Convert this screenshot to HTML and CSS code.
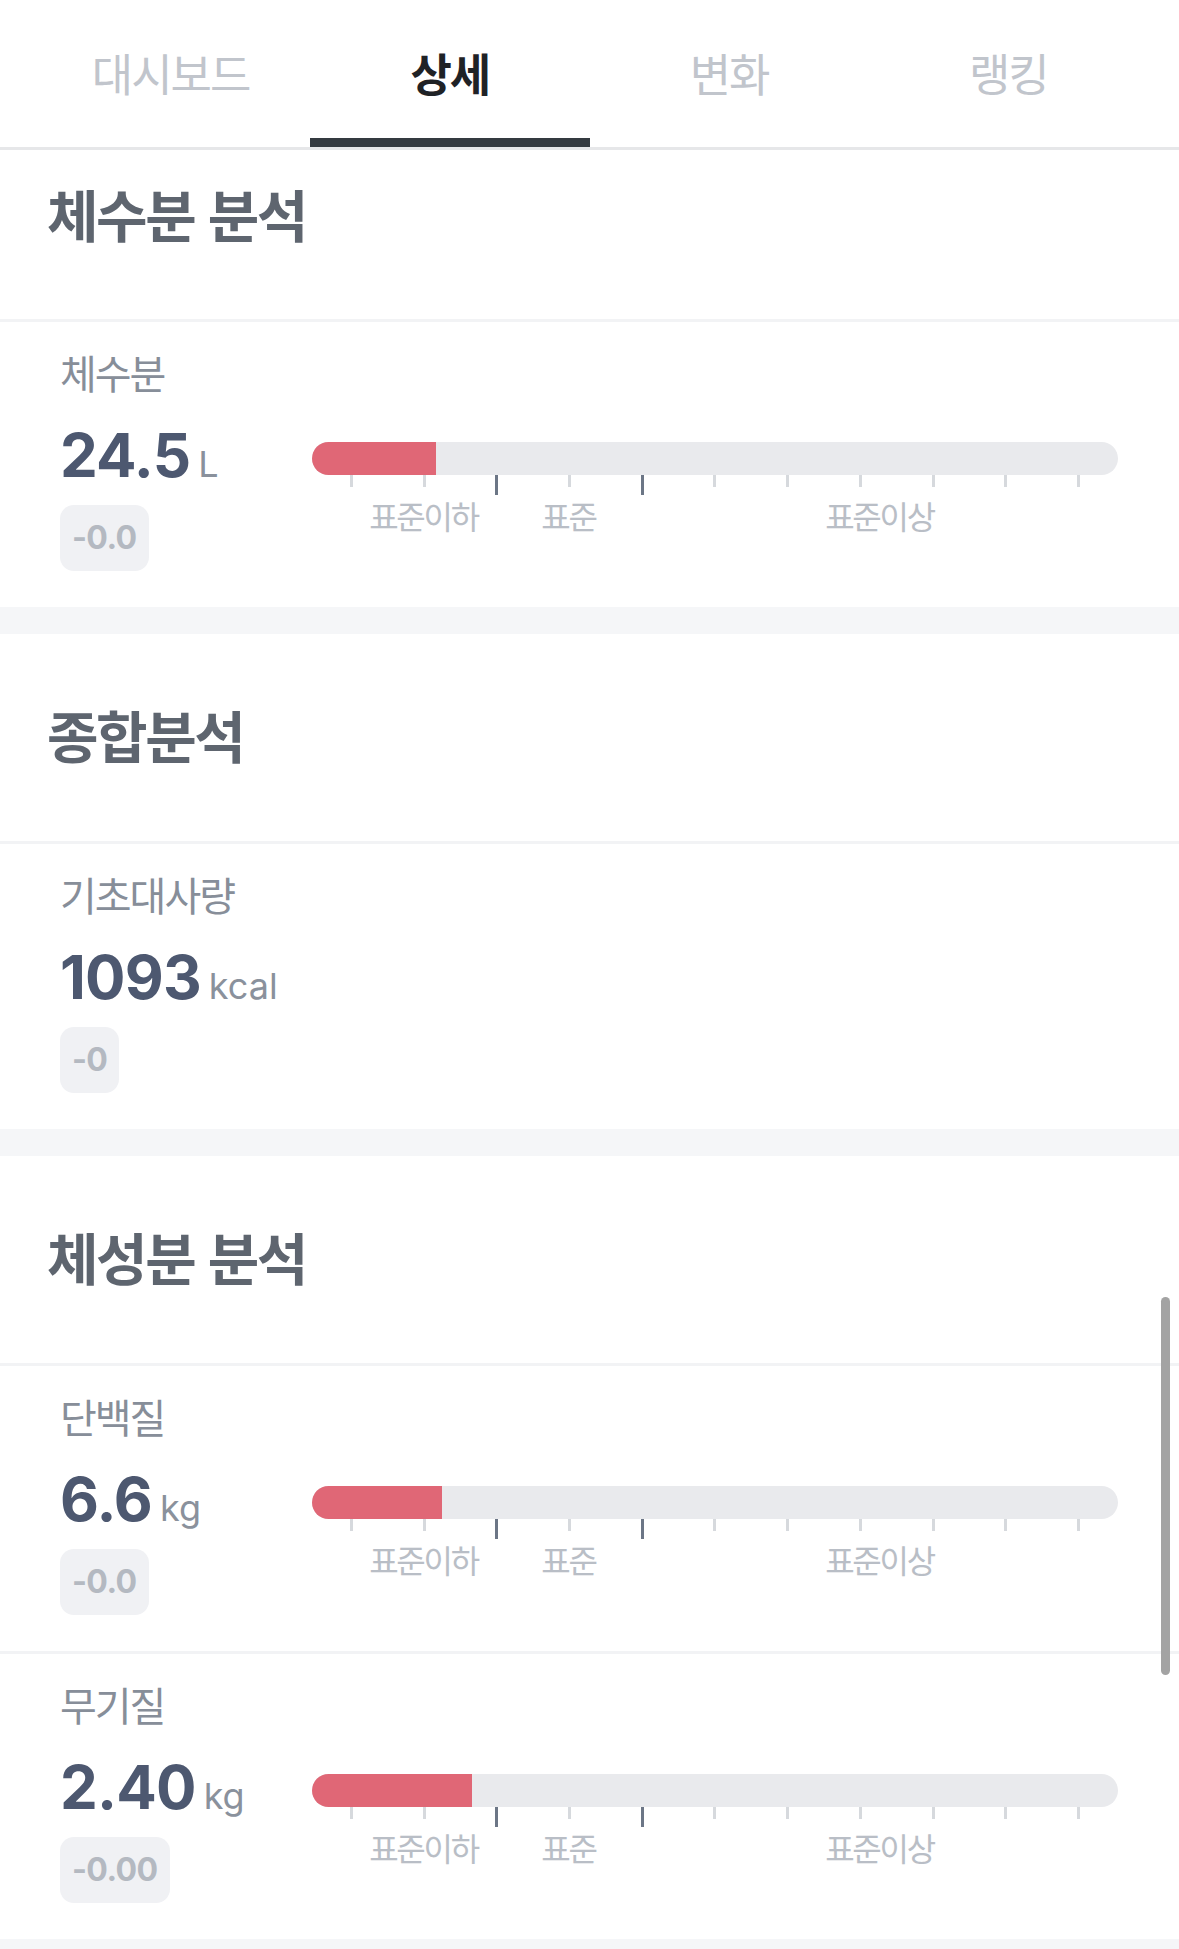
FILE: index.html
```html
<!DOCTYPE html>
<html lang="ko">
<head>
<meta charset="utf-8">
<title>상세</title>
<link rel="stylesheet" href="styles.css">
</head>
<body>
<nav class="tabs">
  <div class="tab">대시보드</div>
  <div class="tab active">상세</div>
  <div class="tab">변화</div>
  <div class="tab">랭킹</div>
</nav>

<section class="section">
  <div class="section-head first"><h2 class="heading">체수분 분석</h2></div>
  <div class="row">
    <div class="info">
      <div class="label">체수분</div>
      <div class="value-line"><span class="value">24.5</span><span class="unit">L</span></div>
      <div class="badge">-0.0</div>
    </div>
    <div class="chart">
      <div class="bar"><div class="fill" style="width:124px"></div></div>
      <div class="ticks"><i class="tick"></i><i class="tick"></i><i class="tick dark"></i><i class="tick"></i><i class="tick dark"></i><i class="tick"></i><i class="tick"></i><i class="tick"></i><i class="tick"></i><i class="tick"></i><i class="tick"></i></div>
      <div class="scale"><span class="lbl">표준이하</span><span class="lbl">표준</span><span class="lbl wide">표준이상</span></div>
    </div>
  </div>
</section>

<section class="section">
  <div class="section-head"><h2 class="heading">종합분석</h2></div>
  <div class="row">
    <div class="info">
      <div class="label">기초대사량</div>
      <div class="value-line"><span class="value">1093</span><span class="unit">kcal</span></div>
      <div class="badge">-0</div>
    </div>
  </div>
</section>

<section class="section">
  <div class="section-head"><h2 class="heading">체성분 분석</h2></div>
  <div class="row">
    <div class="info">
      <div class="label">단백질</div>
      <div class="value-line"><span class="value">6.6</span><span class="unit">kg</span></div>
      <div class="badge">-0.0</div>
    </div>
    <div class="chart">
      <div class="bar"><div class="fill" style="width:130px"></div></div>
      <div class="ticks"><i class="tick"></i><i class="tick"></i><i class="tick dark"></i><i class="tick"></i><i class="tick dark"></i><i class="tick"></i><i class="tick"></i><i class="tick"></i><i class="tick"></i><i class="tick"></i><i class="tick"></i></div>
      <div class="scale"><span class="lbl">표준이하</span><span class="lbl">표준</span><span class="lbl wide">표준이상</span></div>
    </div>
  </div>
  <div class="row">
    <div class="info">
      <div class="label">무기질</div>
      <div class="value-line"><span class="value">2.40</span><span class="unit">kg</span></div>
      <div class="badge">-0.00</div>
    </div>
    <div class="chart">
      <div class="bar"><div class="fill" style="width:160px"></div></div>
      <div class="ticks"><i class="tick"></i><i class="tick"></i><i class="tick dark"></i><i class="tick"></i><i class="tick dark"></i><i class="tick"></i><i class="tick"></i><i class="tick"></i><i class="tick"></i><i class="tick"></i><i class="tick"></i></div>
      <div class="scale"><span class="lbl">표준이하</span><span class="lbl">표준</span><span class="lbl wide">표준이상</span></div>
    </div>
  </div>
</section>

<div class="scroll-thumb"></div>
</body>
</html>
```

FILE: styles.css
```css
html, body {
  margin: 0;
  padding: 0;
}

body {
  background: #f5f6f8;
  font-family: "Noto Sans CJK KR", "Noto Sans", sans-serif;
  min-height: 1949px;
}

.tabs {
  display: flex;
  padding: 0 31px;
  height: 147px;
  background: #fff;
  border-bottom: 3px solid #e6e7e9;
}

.tab {
  flex: 1;
  box-sizing: border-box;
  display: flex;
  align-items: center;
  justify-content: center;
  padding-top: 6px;
  font-size: 45px;
  letter-spacing: -2px;
  color: #c1c5cc;
  border-bottom: 9px solid transparent;
}

.tab.active {
  color: #1f2226;
  font-weight: 700;
  border-bottom-color: #343a40;
}

.section {
  background: #fff;
  margin-bottom: 27px;
}

.section-head {
  height: 210px;
  box-sizing: border-box;
  padding: 70px 47px 0;
  border-bottom: 3px solid #f2f3f5;
}

.section-head.first {
  height: 172px;
  padding-top: 33px;
}

.heading {
  margin: 0;
  font-size: 56px;
  line-height: 60px;
  font-weight: 700;
  letter-spacing: -2.4px;
  color: #5e656f;
}

.row {
  display: flex;
  align-items: flex-start;
  height: 285px;
  box-sizing: border-box;
  padding: 25px 61px 0 60px;
}

.row + .row {
  height: 288px;
  border-top: 3px solid #f2f3f5;
}

.info {
  width: 252px;
  flex: none;
  display: flex;
  flex-direction: column;
  align-items: flex-start;
}

.label {
  font-size: 40px;
  line-height: 50px;
  letter-spacing: -2px;
  color: #878e99;
}

.value-line {
  margin-top: 22px;
  display: flex;
  align-items: baseline;
  gap: 8px;
  height: 72px;
  line-height: 72px;
}

.value {
  font-family: Inter, "Liberation Sans", sans-serif;
  font-size: 60px;
  font-weight: 700;
  letter-spacing: -0.8px;
  color: #4d5870;
}

.unit {
  font-family: Inter, "Liberation Sans", sans-serif;
  font-size: 36px;
  font-weight: 400;
  color: #8a919c;
}

.badge {
  margin-top: 14px;
  height: 66px;
  line-height: 66px;
  padding: 0 12px;
  border-radius: 14px;
  background: #f0f1f4;
  font-family: Inter, "Liberation Sans", sans-serif;
  font-size: 32px;
  font-weight: 700;
  letter-spacing: -0.6px;
  color: #b4b9c1;
}

.chart {
  flex: 1;
  padding-top: 95px;
}

.bar {
  height: 33px;
  border-radius: 17px;
  background: #e9eaed;
  overflow: hidden;
}

.fill {
  height: 100%;
  background: #e06776;
}

.ticks {
  display: flex;
  justify-content: space-between;
  align-items: flex-start;
  padding: 0 38px;
  height: 20px;
}

.tick {
  display: block;
  width: 3px;
  height: 12px;
  background: #d6d9dd;
}

.tick.dark {
  height: 20px;
  background: #6c7686;
}

.scale {
  display: flex;
  margin-top: 5px;
  padding-left: 39px;
  font-size: 32px;
  line-height: 30px;
  letter-spacing: -2.3px;
  color: #b9bec6;
}

.lbl {
  width: 145px;
  text-align: center;
  flex: none;
}

.lbl.wide {
  flex: 1;
  width: auto;
}

.scroll-thumb {
  position: absolute;
  left: 1161px;
  top: 1297px;
  width: 9px;
  height: 378px;
  border-radius: 5px;
  background: #a3a3a3;
}
```
